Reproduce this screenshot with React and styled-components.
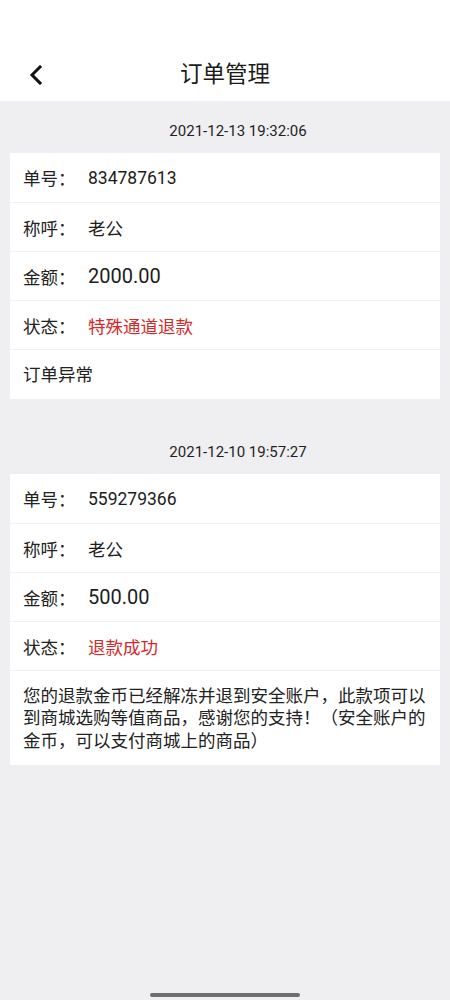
import React from "react";
import styled, { createGlobalStyle } from "styled-components";

const GlobalStyle = createGlobalStyle`
  html, body { margin: 0; padding: 0; }
  body {
    background: #efeef1;
    font-family: Roboto, "Noto Sans CJK SC", sans-serif;
    color: #1f1f1f;
  }
  * { box-sizing: border-box; }
`;

const Page = styled.div`
  min-height: 1000px;
  display: flex;
  flex-direction: column;
  background: #efeef1;
`;

const Header = styled.header`
  background: #ffffff;
  height: 101px;
  padding-top: 48px;
`;

const Toolbar = styled.div`
  position: relative;
  height: 53px;
  display: flex;
  align-items: center;
  justify-content: center;
`;

const BackButton = styled.button`
  position: absolute;
  left: 22px;
  top: 50%;
  transform: translateY(-50%);
  width: 28px;
  height: 28px;
  padding: 0;
  border: 0;
  background: transparent;
  display: flex;
  align-items: center;
  justify-content: center;
`;

const Title = styled.h1`
  margin: 0;
  font-size: 22.5px;
  font-weight: 400;
  color: #1a1a1a;
  line-height: 1;
`;

const DateLine = styled.div`
  padding: 20px 0 11px 26px;
  line-height: 21px;
  font-size: 15px;
  text-align: center;
  color: #1f1f1f;
`;

const Card = styled.section`
  margin: 0 10px 23px;
  background: #ffffff;
`;

const Row = styled.div`
  height: 49px;
  display: flex;
  align-items: center;
  padding: 0 13px;
  border-top: ${(p) => (p.$first ? "none" : "1px solid #f0eff2")};
  font-size: 17.5px;
`;

const Label = styled.span`
  width: 65px;
  flex: none;
  color: #222222;
`;

const Value = styled.span`
  color: ${(p) => (p.$red ? "#d42a2a" : "#1c1c1c")};
  font-size: ${(p) => (p.$big ? "20px" : "17.5px")};
`;

const Note = styled.div`
  padding: 13.5px 13px 13px;
  border-top: 1px solid #f0eff2;
  font-size: 17.5px;
  line-height: 22.5px;
  color: #222222;
`;

const Spacer = styled.div`
  flex: 1;
`;

const HomeBar = styled.div`
  align-self: center;
  width: 150px;
  height: 4px;
  border-radius: 2px;
  background: #6e6d70;
  margin-bottom: 3px;
`;

const orders = [
  {
    time: "2021-12-13 19:32:06",
    no: "834787613",
    name: "老公",
    amount: "2000.00",
    status: "特殊通道退款",
    note: "订单异常",
  },
  {
    time: "2021-12-10 19:57:27",
    no: "559279366",
    name: "老公",
    amount: "500.00",
    status: "退款成功",
    note: "您的退款金币已经解冻并退到安全账户，此款项可以到商城选购等值商品，感谢您的支持！（安全账户的金币，可以支付商城上的商品）",
  },
];

function Chevron() {
  return (
    <svg width="16" height="20" viewBox="0 0 16 20" fill="none">
      <path
        d="M12 2 L4 10 L12 18"
        stroke="#111"
        strokeWidth="3"
        strokeLinecap="square"
        strokeLinejoin="miter"
      />
    </svg>
  );
}

export default function App() {
  return (
    <>
      <GlobalStyle />
      <Page>
        <Header>
          <Toolbar>
            <BackButton aria-label="返回">
              <Chevron />
            </BackButton>
            <Title>订单管理</Title>
          </Toolbar>
        </Header>
        {orders.map((o) => (
          <React.Fragment key={o.no}>
            <DateLine>{o.time}</DateLine>
            <Card>
              <Row $first>
                <Label>单号：</Label>
                <Value>{o.no}</Value>
              </Row>
              <Row>
                <Label>称呼：</Label>
                <Value>{o.name}</Value>
              </Row>
              <Row>
                <Label>金额：</Label>
                <Value $big>{o.amount}</Value>
              </Row>
              <Row>
                <Label>状态：</Label>
                <Value $red>{o.status}</Value>
              </Row>
              <Note>{o.note}</Note>
            </Card>
          </React.Fragment>
        ))}
        <Spacer />
        <HomeBar />
      </Page>
    </>
  );
}
